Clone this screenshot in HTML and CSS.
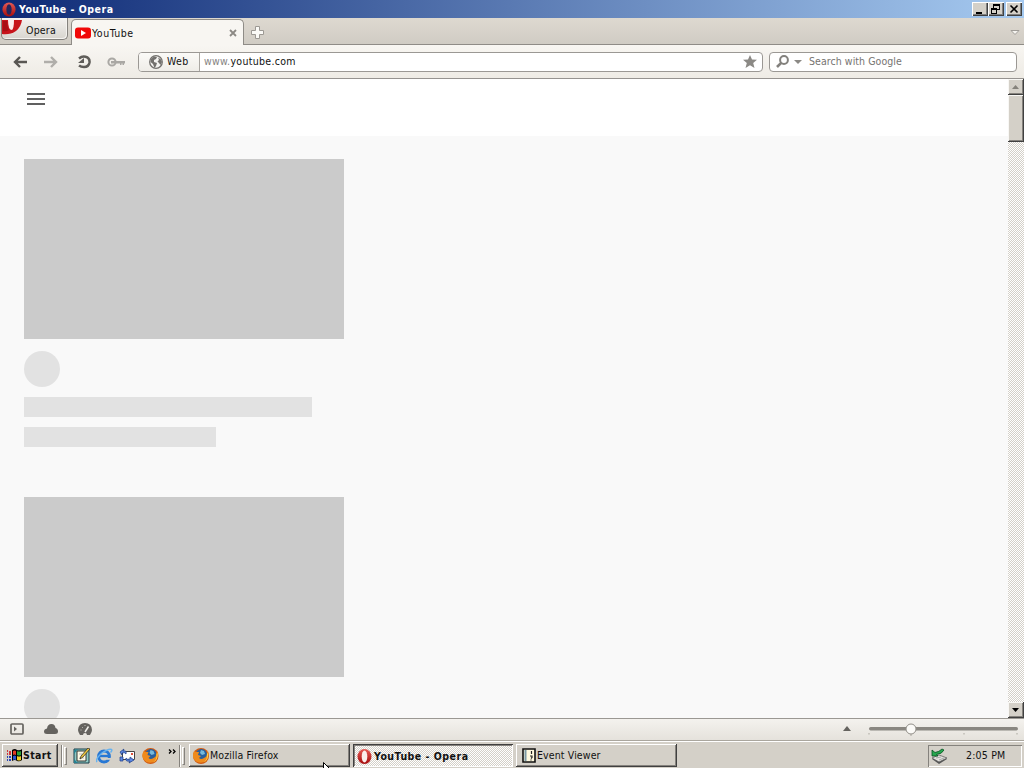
FILE: index.html
```
<!DOCTYPE html>
<html lang="en">

	<head>
		<title>YouTube - Opera</title>
		<meta charset="utf-8">
		<link rel="stylesheet" href="styles.css">
	</head>

	<body>
		<svg class="defs" width="0" height="0">
			<defs>
				<linearGradient id="red" x1="0" y1="0" x2="0" y2="1">
					<stop offset="0" stop-color="#e65a55"/>
					<stop offset="1" stop-color="#a50c0c"/>
				</linearGradient>
				<symbol id="opera" viewBox="0 0 16 16">
					<ellipse cx="8" cy="8" rx="7.5" ry="8" fill="url(#red)"/>
					<ellipse cx="8" cy="8" rx="3" ry="6.3" fill="#fbeeec"/>
				</symbol>
				<symbol id="opera-dark" viewBox="0 0 16 16">
					<ellipse cx="8" cy="8" rx="7.5" ry="8" fill="url(#red)"/>
					<ellipse cx="8" cy="8" rx="3" ry="6" fill="#26265c"/>
				</symbol>
				<symbol id="firefox" viewBox="0 0 16 16">
					<circle cx="8" cy="8" r="8" fill="#cf5a12"/>
					<circle cx="8.4" cy="6.8" r="5.8" fill="#275f9e"/>
					<path d="M8 2l3 1 1 3-3 1-2-2z" fill="#76b9dc"/>
					<path d="M1 3l2 1 3 0-1 3 3 1-2 2q2 2 5 0 3-1 3-5l1-2q2 6-2 10-4 3-9 1-5-3-4-8z" fill="#ef8a1d"/>
					<path d="M15 5q1 7-5 10 5-4 4-9z" fill="#ffd345"/>
				</symbol>
			</defs>
		</svg>

		<div class="titlebar">
			<svg class="title-icon" width="14" height="15"><use href="#opera-dark"/></svg>
			<span class="title-text">YouTube - Opera</span>
			<div class="win-buttons">
				<svg class="win-btn" width="16" height="14"><path d="M4 10h6v2H4z"/></svg>
				<svg class="win-btn" width="16" height="14"><path d="M5 2h7v6h-3v4H3V6h2zM6 4v2h3v1h2V4zM4 8v3h4V8z" fill-rule="evenodd"/></svg>
				<svg class="win-btn close" width="16" height="14"><path d="M4.500 3.500l7 7m0-7l-7 7" stroke="#000" stroke-width="1.600"/></svg>
			</div>
		</div>

		<div class="tabbar">
			<div class="menu-btn">
				<svg width="22" height="17"><path d="M1 0h20q-1 7-6 11-6 4-14 3z" fill="#c7141b"/><path d="M7 0h6q0 8-2 10-4 0-4-10z" fill="#fbeeee"/><path d="M2 1h4q0 6 2 9-3 2-6 1z" fill="#a90e14"/></svg>
				<span>Opera</span>
			</div>
			<div class="tab">
				<svg width="16" height="12"><rect y="0.5" width="16" height="11" rx="3" fill="#f00808"/><path d="M6 3l5 3-5 3z" fill="#fff"/></svg>
				<span>YouTube</span>
				<svg class="tab-close" width="8" height="8"><path d="M1 1l6 6m0-6l-6 6" stroke="#8c8984" stroke-width="1.800"/></svg>
			</div>
			<svg class="new-tab" width="13" height="13"><path d="M4.500.500h4v4h4v4h-4v4h-4v-4h-4v-4h4z" fill="#fbfaf7" stroke="#9c9994"/></svg>
			<svg class="tab-menu" width="10" height="7"><path d="M1 1.500h8l-4 4z" fill="#f6f4f0" stroke="#a09d98"/></svg>
		</div>

		<div class="toolbar">
			<div class="nav">
				<svg width="14" height="12"><path d="M14 6H2M7 1L2 6l5 5" fill="none" stroke="#595753" stroke-width="2.400"/></svg>
				<svg width="14" height="12"><path d="M0 6h12M7 1l5 5-5 5" fill="none" stroke="#b0aeaa" stroke-width="2.400"/></svg>
				<svg class="reload" width="14" height="14"><path d="M2 3.500Q5 1 8.500 1.800q4.500 1.200 4 5.700-.8 4.500-5.500 4.500-3 0-5-1.500" fill="none" stroke="#5f5d59" stroke-width="2.500"/><path d="M1 8h6V3z" fill="#5f5d59"/></svg>
				<svg class="key" width="19" height="10"><circle cx="5" cy="5" r="3.600" fill="none" stroke="#aaa8a4" stroke-width="2"/><path d="M4 4h14v2.500h-1V8h-1.500V6.500h-1V8H13V6.500H4z" fill="#aaa8a4"/></svg>
			</div>
			<div class="address">
				<div class="web">
					<svg width="14" height="14"><circle cx="7" cy="7" r="6.300" fill="#f4f3f0" stroke="#73716e" stroke-width="1.300"/><path d="M2 4l3-2.500 3 .5-1 2-2 1 0 2 3 1-1 3-1.500 2-1.500-4-2.500-2zM9 2.500l3 2 1 2.500-1.500 3-1.500-2-1.500-1.500 1.500-1.500z" fill="#73716e"/></svg>
					<span>Web</span>
				</div>
				<div class="url"><span class="sub">www.</span>youtube.com</div>
				<svg class="star" width="14" height="13"><path d="M7 0l2 4.500 5 .3-3.800 3.200L11.500 13 7 10.300 2.500 13l1.300-5L0 4.800l5-.3z" fill="#8b8985"/></svg>
			</div>
			<div class="search">
				<svg width="13" height="13"><circle cx="8" cy="5" r="3.900" fill="none" stroke="#83817d" stroke-width="2"/><path d="M5.200 7.800L1 12" stroke="#83817d" stroke-width="2.600"/></svg>
				<svg class="drop" width="8" height="4"><path d="M0 0h8L4 4z" fill="#8b8985"/></svg>
				<span>Search with Google</span>
			</div>
		</div>

		<div class="viewport">
			<div class="page">
				<div class="masthead">
					<svg width="18" height="12"><path d="M0 0h18v2H0zM0 5h18v2H0zM0 10h18v2H0z" fill="#606060"/></svg>
				</div>
				<div class="videos">
					<div class="video">
						<div class="thumb"></div>
						<div class="avatar"></div>
						<div class="line long"></div>
						<div class="line short"></div>
					</div>
					<div class="video">
						<div class="thumb"></div>
						<div class="avatar"></div>
					</div>
				</div>
			</div>
			<div class="scrollbar">
				<svg class="scroll-btn" width="16" height="16"><path d="M4 10h7L7.500 6z" fill="#85827b"/></svg>
				<div class="scroll-thumb"></div>
				<svg class="scroll-btn down" width="16" height="16"><path d="M4 6h7l-3.500 4z"/></svg>
			</div>
		</div>

		<div class="statusbar">
			<svg width="14" height="12"><rect x="1" y="1" width="12" height="10" rx="1" fill="none" stroke="#65635f" stroke-width="1.700"/><path d="M4 3.500l3 2.500-3 2.500z" fill="#65635f"/></svg>
			<svg width="14" height="10"><path d="M3 10Q0 10 0 7.500 0 5 3 4.500 3.500 0 7.500 0q3.500 0 4 4Q14 4.500 14 7.500q0 2.500-3 2.500z" fill="#65635f"/></svg>
			<svg width="14" height="12"><path d="M2 12Q0 9 0 7 .5 0 7 0q6.500 0 7 7 0 2-2 5H9q0-2-2-2t-2 2z" fill="#65635f"/><path d="M7 9l3.500-5.500" stroke="#f2f0ec" stroke-width="1.500"/><path d="M2.500 7h1M4 4l.8.8M7 2v1" stroke="#c5c2bc"/></svg>
			<svg class="up" width="8" height="5"><path d="M0 5h8L4 0z" fill="#65635f"/></svg>
			<svg class="zoom" width="150" height="16"><rect x="1" y="6" width="149" height="3.500" rx="1.700" fill="#8a8781"/><path d="M1 12v1.500M43 13v2M96 12v1.500M149 12v1.500" stroke="#aaa79f"/><circle cx="43" cy="8" r="5" fill="#fbfaf7" stroke="#918e88"/></svg>
		</div>

		<div class="taskbar">
			<div class="start">
				<svg width="17" height="15"><path d="M6 2q3-2 5 0 3 1 5-1v11q-2 2-5 1-2-2-5 0z"/><path d="M7 3q2-1 3 0v4q-2-1-3 0z" fill="#e33b25"/><path d="M11 3q2 1 4 0v4q-2 1-4 0z" fill="#27a238"/><path d="M7 8q2-1 3 0v4q-2-1-3 0z" fill="#2b55d0"/><path d="M11 8q2 1 4 0v4q-2 1-4 0z" fill="#efcf26"/><path d="M1 3h1m1 1h2M1 6h1m1 0h2" stroke="#d0353a" stroke-width="2"/><path d="M1 9h1m1 0h2M1 12h1m1 0h2" stroke="#2945b5" stroke-width="2"/></svg>
				<span>Start</span>
			</div>
			<i class="divider"></i><i class="grip"></i>
			<div class="quick">
				<svg width="17" height="16"><path d="M1 1h15v14H1z" fill="#8fc9c4" stroke="#163d48"/><path d="M1 2l4-1-4 5zM1 15v-4l4 4z" fill="#258092"/><path d="M4 3h9v10H4z" fill="#fffbe7" stroke="#222" stroke-width=".9"/><path d="M6 6h3M6 10h5" stroke="#bbb"/><path d="M15 0L8 8l-1 3 3-2 7-8z" fill="#ecc43d" stroke="#222" stroke-width=".7"/></svg>
				<svg width="17" height="16"><circle cx="8" cy="8.500" r="5.400" fill="none" stroke="#2878d4" stroke-width="3"/><path d="M4 8h9" stroke="#2878d4" stroke-width="2.400"/><path d="M10.500 10h6v1.800h-6z" fill="#d4d0c8"/><path d="M1 14Q-1 11 6 5q7-5 9.500-3.500 1 1-1 3" fill="none" stroke="#68b3ef" stroke-width="1.500"/></svg>
				<svg width="17" height="16"><path d="M3.500 3.500h12v8h-12z" fill="#fff" stroke="#444"/><path d="M12 5h2v2h-2z" fill="#e0523c"/><path d="M5 1L1 4l2 3V5q3-1 4 1Q8 2 4 3zM10 15l5-3-4-3v2q-3 1-4-1-1 4 4 3zM1 9l3 0v4H1z" fill="#5c86e0" stroke="#1c3e87" stroke-width=".7"/></svg>
				<svg width="17" height="16"><use href="#firefox"/></svg>
			</div>
			<svg class="more" width="8" height="5"><path d="M1 .5l2 2-2 2M5 .5l2 2-2 2" fill="none" stroke="#000" stroke-width="1.300"/></svg>
			<i class="divider second"></i><i class="grip"></i>
			<div class="tasks">
				<div class="task firefox">
					<svg width="16" height="16"><use href="#firefox"/></svg>
					<span>Mozilla Firefox</span>
					<svg class="cursor" width="10" height="15"><path d="M.5.500v12l3-3 2 5 2-1-2-4h4z" fill="#fff" stroke="#000"/></svg>
				</div>
				<div class="task active">
					<svg width="15" height="15"><use href="#opera"/></svg>
					<span>YouTube - Opera</span>
				</div>
				<div class="task viewer">
					<svg width="14" height="15"><path d="M1 1h12v13H1z" fill="#fff9df" stroke="#111" stroke-width="1.600"/><path d="M3.500 2v11" stroke="#7b99a5" stroke-width="2"/><path d="M9.500 3v3M8 8h2v1.500l-1 1M9 11.500v1" fill="none" stroke="#222" stroke-width="1.200"/></svg>
					<span>Event Viewer</span>
				</div>
			</div>
			<div class="tray">
				<svg width="17" height="16"><path d="M1 11l7-3 8 3-8 5z" fill="#555"/><path d="M1 10l7-3 8 3-8 4z" fill="#e2e0dc" stroke="#555" stroke-width=".7"/><path d="M5 10l5-1m-2 3l5-2" stroke="#aaa"/><path d="M1 2v6h6L5.500 6.500Q11 6 13 2l-2-1Q8 4 4 4.500z" fill="#27a84f" stroke="#095222" stroke-width=".8"/></svg>
				<span>2:05 PM</span>
			</div>
		</div>
	</body>

</html>
```
FILE: styles.css
```
* {
	box-sizing: border-box;
}

body {
	width: 1024px;
	height: 768px;
	margin: 0;
	overflow: hidden;
	display: flex;
	flex-direction: column;
	background: #d4d0c8;
	font: 10.5px/13px 'DejaVu Sans Condensed', 'DejaVu Sans', sans-serif;
	font-stretch: condensed;
	color: #111;
	white-space: nowrap;
}

svg {
	display: block;
	flex: none;
}

.defs {
	position: absolute;
}

/* title bar */
.titlebar {
	height: 18px;
	flex: none;
	display: flex;
	align-items: center;
	padding: 0 2px;
	background: linear-gradient(to right, #0d2975, #a6caf0);
}

.title-text {
	margin-left: 3px;
	color: #fff;
	font-weight: bold;
	letter-spacing: .5px;
}

.win-buttons {
	margin-left: auto;
	display: flex;
}

.win-btn {
	background: #d4d0c8;
	box-shadow: inset 1px 1px #fff, inset -1px -1px #404040, inset -2px -2px #808080;
}

.close {
	margin-left: 2px;
}

/* tabs */
.tabbar {
	height: 27px;
	flex: none;
	display: flex;
	align-items: flex-start;
	background: linear-gradient(#ded9d0, #d0ccc4);
	border-bottom: 1px solid #8f8c87;
}

.menu-btn {
	width: 67px;
	height: 22px;
	margin-left: 1px;
	display: flex;
	border: 1px solid #85827d;
	border-top: 0;
	border-radius: 0 0 5px 5px;
	background: linear-gradient(#f4f2ef, #d8d5cf);
	box-shadow: inset -1px -1px #f5f3f0;
}

.menu-btn svg {
	margin-left: -1px;
	margin-top: 2px;
}

.menu-btn span {
	margin: 6px 0 0 3px;
	letter-spacing: .2px;
}

.tab {
	width: 173px;
	height: 27px;
	margin: 1px 0 0 3px;
	padding: 0 6px 0 3px;
	display: flex;
	align-items: center;
	border: 1px solid #8f8c87;
	border-bottom: 0;
	border-radius: 5px 5px 0 0;
	background: #f8f6f2;
}

.tab span {
	margin-left: 1px;
	letter-spacing: .5px;
}

.tab-close {
	margin-left: auto;
}

.new-tab {
	margin: 8px 0 0 7px;
}

.tab-menu {
	margin: 11px 4px 0 auto;
}

/* address row */
.toolbar {
	height: 34px;
	flex: none;
	display: flex;
	align-items: center;
	padding: 0 7px 0 13px;
	background: linear-gradient(#f8f6f2, #eeebe5);
	border-bottom: 1px solid #969390;
}

.nav {
	width: 125px;
	display: flex;
	align-items: center;
	gap: 17px;
}

.reload {
	margin-left: 2px;
}

.key {
	margin-left: -1px;
}

.address,
.search {
	height: 20px;
	display: flex;
	align-items: center;
	border: 1px solid #9b9894;
	border-radius: 4px;
	background: #fff;
}

.address {
	width: 625px;
	overflow: hidden;
}

.web {
	width: 61px;
	height: 18px;
	padding-left: 10px;
	display: flex;
	align-items: center;
	gap: 4px;
	border-right: 1px solid #aaa7a2;
	background: linear-gradient(#fbfaf7, #efede8);
	letter-spacing: .3px;
}

.url {
	margin-left: 4px;
	letter-spacing: .3px;
}

.sub {
	color: #85827f;
}

.star {
	margin: 0 5px 0 auto;
}

.search {
	width: 248px;
	margin-left: 6px;
	padding-left: 6px;
	color: #767471;
}

.search span {
	letter-spacing: .06px;
}

.drop {
	margin: 0 7px 0 5px;
}

/* page */
.viewport {
	height: 639px;
	flex: none;
	display: flex;
	overflow: hidden;
}

.page {
	width: 1008px;
	background: #f9f9f9;
}

.masthead {
	height: 57px;
	padding: 14px 27px;
	background: #fff;
}

.videos {
	padding: 23px 24px 0;
}

.video {
	height: 338px;
}

.thumb {
	width: 320px;
	height: 180px;
	background: #cbcbcb;
}

.avatar {
	width: 36px;
	height: 36px;
	margin: 12px 0 10px;
	border-radius: 50%;
	background: #e2e2e2;
}

.line {
	height: 20px;
	margin-bottom: 10px;
	background: #e2e2e2;
}

.long {
	width: 288px;
}

.short {
	width: 192px;
}

.scrollbar {
	width: 16px;
	display: flex;
	flex-direction: column;
	background: repeating-conic-gradient(#fff 0 25%, #d4d0c8 0 50%) 0 0 / 2px 2px;
}

.scroll-btn,
.scroll-thumb {
	background: #d4d0c8;
	box-shadow: inset -1px -1px #404040, inset 1px 1px #f8f7f4, inset -2px -2px #85827d;
}

.scroll-thumb {
	height: 47px;
}

.down {
	margin-top: auto;
}

/* status bar */
.statusbar {
	height: 22px;
	flex: none;
	display: flex;
	align-items: center;
	gap: 20px;
	padding: 0 6px 2px 10px;
	border-top: 1px solid #9b9893;
	background: linear-gradient(#f4f2ee, #e5e2dc);
}

.up {
	margin-left: auto;
}

.zoom {
	margin-left: -3px;
}

/* taskbar */
.taskbar {
	height: 28px;
	flex: none;
	display: flex;
	align-items: center;
	padding: 3px 2px 1px 2px;
	border-top: 1px solid #aaa69e;
	box-shadow: inset 0 1px #fff;
}

.start {
	width: 56px;
	height: 23px;
	padding-left: 4px;
	display: flex;
	align-items: center;
	font-weight: bold;
	letter-spacing: .35px;
	box-shadow: inset -1px -1px #404040, inset 1px 1px #fff, inset -2px -2px #85827d;
}

.divider {
	width: 2px;
	height: 22px;
	margin-left: 3px;
	border-left: 1px solid #85827d;
	border-right: 1px solid #fff;
}

.grip {
	width: 3px;
	height: 18px;
	margin-left: 1px;
	border: 1px solid #fff;
	border-right-color: #85827d;
	border-bottom-color: #85827d;
}

.quick {
	margin-left: 6px;
	display: flex;
	gap: 6px;
}

.more {
	margin: 0 0 8px 9px;
}

.second {
	margin-left: 3px;
}

.tasks {
	margin-left: 4px;
	display: flex;
	gap: 3px;
}

.task {
	position: relative;
	width: 161px;
	height: 23px;
	padding-left: 4px;
	display: flex;
	align-items: center;
	gap: 1px;
	letter-spacing: .12px;
	box-shadow: inset -1px -1px #404040, inset 1px 1px #fff, inset -2px -2px #85827d;
}

.active {
	width: 160px;
	padding: 1px 0 0 4px;
	gap: 2px;
	font-weight: bold;
	letter-spacing: .5px;
	background: repeating-conic-gradient(#fff 0 25%, #d4d0c8 0 50%) 0 0 / 2px 2px;
	box-shadow: inset 1px 1px #404040, inset -1px -1px #fff, inset 2px 2px #85827d;
}

.viewer {
	padding-left: 6px;
}

.cursor {
	position: absolute;
	left: 134px;
	top: 18px;
}

.tray {
	width: 94px;
	height: 22px;
	margin-left: auto;
	padding-left: 3px;
	display: flex;
	align-items: center;
	box-shadow: inset 1px 1px #85827d, inset -1px -1px #fff;
}

.tray span {
	margin-left: 18px;
	letter-spacing: .2px;
}
```
